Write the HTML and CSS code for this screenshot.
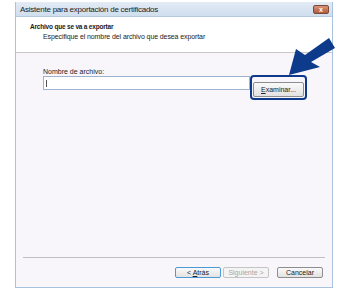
FILE: index.html
```html
<!DOCTYPE html>
<html lang="es">
<head>
  <meta charset="UTF-8" />
  <title>Asistente para exportación de certificados</title>
  <link rel="stylesheet" href="styles.css">
</head>
<body>
  <div class="window">
    <div class="titlebar">
      <span class="title">Asistente para exportación de certificados</span>
      <span class="close">x</span>
    </div>

    <div class="header">
      <h1>Archivo que se va a exportar</h1>
      <p>Especifique el nombre del archivo que desea exportar</p>
    </div>

    <div class="content">
      <label for="file">Nombre de archivo:</label>
      <div class="file-row">
        <div class="input"><span class="caret"></span></div>
        <div class="highlight">
          <button class="btn"><u>E</u>xaminar...</button>
        </div>
      </div>
    </div>

    <div class="footer">
      <div class="buttons">
        <button class="btn btn-default">&lt; <u>A</u>trás</button>
        <button class="btn" disabled>Siguiente &gt;</button>
        <button class="btn btn-cancel">Cancelar</button>
      </div>
    </div>
  </div>

  <svg class="arrow" width="347" height="290" viewBox="0 0 347 290">
    <polygon points="289,75 296,49 305,55 329,38 335,48 311,62 320,67" fill="#0d3a8a" />
  </svg>
</body>
</html>
```

FILE: styles.css
```css
* {
  box-sizing: border-box;
}

body {
  margin: 0;
  background: #fff;
  font-family: "Liberation Sans", Arial, sans-serif;
  color: #1a1a1a;
}

.window {
  margin: 2px 0 0 15px;
  width: 318px;
  height: 286px;
  border: 1px solid #a9c3df;
  border-top: none;
  display: flex;
  flex-direction: column;
  background: #f8f6fb;
}

.titlebar {
  height: 15px;
  display: flex;
  align-items: center;
  justify-content: space-between;
  padding: 0 3px 0 4px;
  background: linear-gradient(to bottom, #e3ebf5, #cfdeee);
  border-bottom: 1px solid #b5c9e0;
}

.title {
  font-size: 8px;
  letter-spacing: -0.25px;
  color: #222;
}

.close {
  width: 16px;
  height: 9px;
  border: 1px solid #7a4a38;
  border-radius: 2px;
  background: linear-gradient(to bottom, #d9957c, #b25a3f);
  color: #fff;
  font-size: 7px;
  line-height: 7px;
  text-align: center;
  font-weight: bold;
}

.header {
  height: 36px;
  background: #fff;
  padding: 6px 0 0 14px;
  border-bottom: 1px solid #c8c8c8;
}

.header h1 {
  margin: 0;
  font-size: 6.5px;
  letter-spacing: -0.2px;
  font-weight: bold;
}

.header p {
  margin: 3px 0 0 13px;
  font-size: 7px;
  letter-spacing: -0.1px;
}

.content {
  flex: 1;
  padding: 15px 0 0 27px;
}

label {
  display: block;
  font-size: 7px;
  margin-bottom: 0;
}

.file-row {
  display: flex;
  align-items: flex-start;
}

.input {
  width: 207px;
  height: 14px;
  margin-top: 1px;
  border: 1px solid #9cb4d0;
  background: #fff;
  padding: 3px 0 0 2px;
}

.caret {
  display: block;
  width: 1px;
  height: 7px;
  background: #555;
}

.highlight {
  border: 2px solid #0d3a8a;
  border-radius: 4px;
  padding: 1px;
}

.btn {
  font-family: "Liberation Sans", Arial, sans-serif;
  font-size: 7px;
  height: 13px;
  padding: 0;
  border: 1px solid #8d8d8d;
  border-radius: 2px;
  background: linear-gradient(to bottom, #fafafa, #e2e2e2);
  color: #222;
}

.highlight .btn {
  width: 51px;
  height: 15px;
}

.footer {
  margin: 0 7px;
  border-top: 1px solid #c0c0c0;
  height: 30px;
  padding-top: 9px;
}

.buttons {
  display: flex;
  justify-content: flex-end;
  padding-right: 2px;
}

.buttons .btn {
  width: 46px;
  height: 11px;
  margin-left: 2px;
}

.btn-default {
  border-color: #4b9ad6;
}

.btn:disabled {
  color: #a8a8a8;
  border-color: #c4c4c4;
  background: #f4f4f4;
}

.buttons .btn-cancel {
  margin-left: 8px;
}

.arrow {
  position: absolute;
  left: 0;
  top: 0;
  pointer-events: none;
}
```
